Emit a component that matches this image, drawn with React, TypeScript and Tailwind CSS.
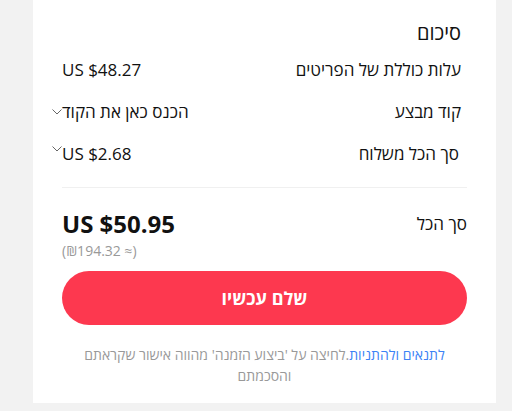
import React from "react";

const Chevron = () => (
  <svg width="10" height="6" viewBox="0 0 10 6" className="-ml-[10px] shrink-0" fill="none">
    <path d="M0.5 0.5 L5 5 L9.5 0.5" stroke="#555" strokeWidth="0.9" />
  </svg>
);

export default function App() {
  return (
    <div
      className="w-[512px] h-[411px] bg-[#f2f2f2] overflow-hidden"
      style={{ fontFamily: '"Open Sans", "Noto Sans", "Liberation Sans", sans-serif' }}
    >
      <div dir="rtl" className="ml-[33px] w-[463px] h-[403px] bg-white px-[29px] pt-[21px] text-[#111]">
        <div className="pr-[6px]">
          <div className="text-[20px] leading-[24px] font-medium">סיכום</div>
          <div className="mt-[4px] h-[42px] flex items-center justify-between text-[17px]">
            <span>עלות כוללת של הפריטים</span>
            <span dir="ltr">US $48.27</span>
          </div>
          <div className="h-[42px] flex items-center justify-between text-[17px]">
            <span>קוד מבצע</span>
            <div dir="ltr" className="flex items-center">
              <Chevron />
              <span dir="rtl">הכנס כאן את הקוד</span>
            </div>
          </div>
          <div className="h-[42px] flex items-center justify-between text-[17px]">
            <span className="pr-[2px]">סך הכל משלוח</span>
            <div dir="ltr" className="flex items-start">
              <div className="mt-[5px]">
                <Chevron />
              </div>
              <span>US $2.68</span>
            </div>
          </div>
        </div>
        <div className="mt-[12px] h-px bg-[#f0f0f0]" />
        <div className="mt-[22px] flex justify-between items-start">
          <span className="text-[17px] leading-[28px]">סך הכל</span>
          <div dir="ltr" className="flex flex-col items-start">
            <span className="text-[24px] leading-[28px] font-bold text-[#111]">US $50.95</span>
            <span className="mt-[4px] text-[14px] leading-[18px] text-[#999]">(₪194.32 ≈)</span>
          </div>
        </div>
        <button className="mt-[11px] w-full h-[54px] rounded-full bg-[#fd384f] text-white text-[18px] font-bold">
          שלם עכשיו
        </button>
        <p className="mt-[19px] text-center text-[14px] leading-[21px] text-[#999]">
          <a className="text-[#3b82f6]">לתנאים ולהתניות</a>.לחיצה על 'ביצוע הזמנה' מהווה אישור שקראתם והסכמתם
        </p>
      </div>
    </div>
  );
}
